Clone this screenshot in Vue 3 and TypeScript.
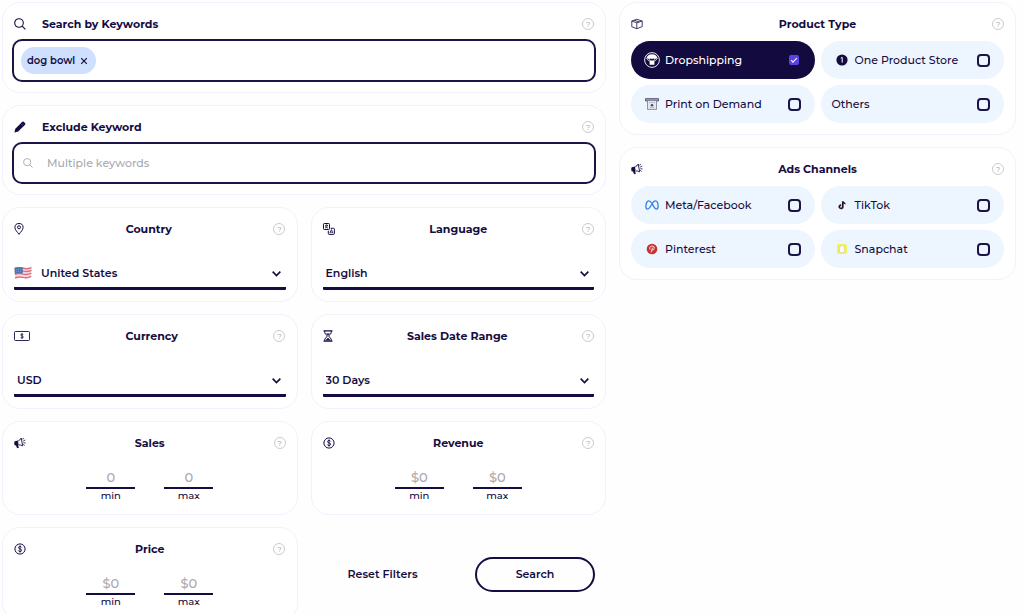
<script setup lang="ts">
import { reactive, ref } from 'vue'

interface SelectFilter {
  id: string
  title: string
  icon: string
  value: string
  options: string[]
  flag?: boolean
}

interface RangeFilter {
  id: string
  title: string
  icon: string
  placeholder: string
}

interface Choice {
  label: string
  icon?: string
  checked: boolean
}

interface ChoiceGroup {
  id: string
  title: string
  icon: string
  choices: Choice[]
}

const tags = ref<string[]>(['dog bowl'])
const keyword = ref('')
const excluded = ref('')

const selects = reactive<SelectFilter[]>([
  { id: 'country', title: 'Country', icon: 'pin', value: 'United States', options: ['United States', 'Canada', 'Germany'], flag: true },
  { id: 'language', title: 'Language', icon: 'translate', value: 'English', options: ['English', 'French', 'German'] },
  { id: 'currency', title: 'Currency', icon: 'banknote', value: 'USD', options: ['USD', 'EUR', 'GBP'] },
  { id: 'range', title: 'Sales Date Range', icon: 'hourglass', value: '30 Days', options: ['7 Days', '30 Days', '90 Days'] },
])

const ranges: RangeFilter[] = [
  { id: 'sales', title: 'Sales', icon: 'megaphone', placeholder: '0' },
  { id: 'revenue', title: 'Revenue', icon: 'coin', placeholder: '$0' },
  { id: 'price', title: 'Price', icon: 'coin', placeholder: '$0' },
]

const groups = reactive<ChoiceGroup[]>([
  {
    id: 'product',
    title: 'Product Type',
    icon: 'box',
    choices: [
      { label: 'Dropshipping', icon: 'parachute', checked: true },
      { label: 'One Product Store', icon: 'one', checked: false },
      { label: 'Print on Demand', icon: 'printer', checked: false },
      { label: 'Others', checked: false },
    ],
  },
  {
    id: 'ads',
    title: 'Ads Channels',
    icon: 'megaphone',
    choices: [
      { label: 'Meta/Facebook', icon: 'meta', checked: false },
      { label: 'TikTok', icon: 'tiktok', checked: false },
      { label: 'Pinterest', icon: 'pinterest', checked: false },
      { label: 'Snapchat', icon: 'snapchat', checked: false },
    ],
  },
])

function addTag() {
  const value = keyword.value.trim()
  if (value) tags.value.push(value)
  keyword.value = ''
}

function removeTag(index: number) {
  tags.value.splice(index, 1)
}

function reset() {
  tags.value = []
  excluded.value = ''
  groups.forEach((group) => group.choices.forEach((choice) => (choice.checked = false)))
}
</script>

<template>
  <svg class="sprite" aria-hidden="true">
    <symbol id="i-search" viewBox="0 0 12 12">
      <circle cx="5" cy="5" r="4.3" fill="none" stroke="currentColor" stroke-width="1.1" />
      <path d="M8.2 8.2 11.4 11.4" stroke="currentColor" stroke-width="1.2" />
    </symbol>
    <symbol id="i-pencil" viewBox="0 0 12 12">
      <path d="M.4 11.6 1.3 7.7 6.6 2.4 9.5 5.3 4.2 10.6zM7.3 1.7 8.3.8Q9 .2 9.7.8L11.2 2.3Q11.8 3 11.2 3.6L10.2 4.6z" fill="currentColor" />
      <path d="M6.500 2.500 7.500 1.500 10.400 4.400 9.400 5.400z" fill="currentColor" />
    </symbol>
    <symbol id="i-pin" viewBox="0 0 10 12">
      <path d="M5 11.3C3.4 9 .9 6.8 .9 4.5A4.1 4 0 0 1 9.1 4.5C9.1 6.8 6.6 9 5 11.3z" fill="none" stroke="currentColor" />
      <circle cx="5" cy="4.3" r="1.5" fill="none" stroke="currentColor" />
    </symbol>
    <symbol id="i-translate" viewBox="0 0 12 12">
      <rect x=".5" y=".5" width="6" height="6" rx=".8" fill="none" stroke="currentColor" />
      <path d="M2 2.3H5M3.5 1.5V2.3M4.6 2.3Q4 4.3 2 5.2M2.3 3.2Q3.2 4.8 5 5.2" fill="none" stroke="currentColor" stroke-width=".8" />
      <path d="M7.7 5.3H10.5Q11.4 5.3 11.4 6.2V10.5Q11.4 11.4 10.5 11.4H6.2Q5.3 11.4 5.3 10.5V7.7" fill="none" stroke="currentColor" />
      <path d="M6.8 10.3 8.4 6.6 10 10.3M7.4 9.2H9.4" fill="none" stroke="currentColor" stroke-width=".8" />
    </symbol>
    <symbol id="i-banknote" viewBox="0 0 16 10">
      <rect x=".5" y=".5" width="15" height="9" rx="1" fill="none" stroke="currentColor" stroke-width=".9" />
      <path d="M9.300 3.800Q8.900 3 8 3 6.800 3 6.800 3.900 6.800 4.700 8 4.900 9.300 5.100 9.300 6.100 9.300 7 8 7 7 7 6.600 6.200M8 2.100V7.900" fill="none" stroke="currentColor" stroke-width=".8" />
    </symbol>
    <symbol id="i-hourglass" viewBox="0 0 10 12">
      <path d="M.5 .9H9.5M.5 11.1H9.5" stroke="currentColor" stroke-width="1.3" />
      <path d="M1.8 1V3L4.4 6 1.8 9V11M8.2 1V3L5.6 6 8.2 9V11" fill="none" stroke="currentColor" />
      <path d="M2.3 10.5 5 7.8 7.7 10.5zM3 3.5H7L5 5.5z" fill="currentColor" />
    </symbol>
    <symbol id="i-megaphone" viewBox="0 0 12 12">
      <path d="M.3 5.2Q.3 4.5 1 4.3L4 3.6 4.600 8.2 4 8.3 4.9 10.8 3.1 11.3 2 8.6Q.5 8.5 .3 7.5z" fill="currentColor" />
      <path d="M4.3 3.8Q6.4 3 7.2 1L8.7 8.9Q6.8 7.6 4.6 8" fill="none" stroke="currentColor" stroke-width=".9" />
      <path d="M8.7 2.5 9.6 .9M9.2 4.1 11.3 3M9.4 5.7 11.6 6M9.2 7.2 10.7 8.5" stroke="currentColor" stroke-width=".8" />
    </symbol>
    <symbol id="i-coin" viewBox="0 0 12 12">
      <circle cx="6" cy="6" r="5.100" fill="none" stroke="currentColor" stroke-width="1" />
      <path d="M7.700 4.500Q7.200 3.500 6 3.500 4.500 3.500 4.500 4.700 4.500 5.700 6 5.900 7.700 6.200 7.700 7.300 7.700 8.500 6 8.500 4.700 8.500 4.200 7.400M6 2.400V9.600" fill="none" stroke="currentColor" stroke-width=".9" />
    </symbol>
    <symbol id="i-box" viewBox="0 0 12 12">
      <path d="M.8 3 5.8 1.3 11.2 3V8.6L5.8 10.7 .8 8.8zM.8 3 5.8 4.8 11.2 3M5.8 4.8V10.7M3.2 2.2 8.4 4" fill="none" stroke="currentColor" stroke-width=".8" stroke-linejoin="round" />
    </symbol>
    <symbol id="i-chevron" viewBox="0 0 10 10">
      <path d="M1.5 3.3 5 6.8 8.5 3.3" fill="none" stroke="currentColor" stroke-width="1.5" />
    </symbol>
    <symbol id="i-close" viewBox="0 0 8 8">
      <path d="M1.2 1.2 6.8 6.8M6.8 1.2 1.2 6.8" stroke="currentColor" stroke-width="1.2" />
    </symbol>
    <symbol id="i-flag" viewBox="0 0 16 12">
      <path d="M.5 1.5Q4 .2 8 1.2T15.6 .5L15.3 10Q12 11.5 8 10.5T1 11.3z" fill="#f5dfe3" />
      <path d="M.5 2Q4 .8 8 1.8T15.5 1.2M.6 4.5Q4 3.3 8 4.3T15.5 3.6M.8 7.2Q4 6 8 7T15.4 6.2M1 10.2Q4 9 8 9.9T15.3 9" fill="none" stroke="#e0707d" stroke-width="1.3" />
      <path d="M.5 1.5Q4 .4 7.8 1.2V6.5Q4 5.8 .8 6.9z" fill="#4c71ad" />
      <path d="M2 3H7M2 4.8H7" stroke="#a9bddb" stroke-width=".6" stroke-dasharray=".8 .8" />
    </symbol>
    <symbol id="i-parachute" viewBox="0 0 16 16">
      <circle cx="8" cy="8" r="7.4" fill="none" stroke="currentColor" stroke-width=".9" />
      <path d="M2.3 7.2Q3 2.3 8 2.300T13.700 7.200Q12.5 5.9 11 7 9.5 5.9 8 7 6.5 5.9 5 7 3.5 5.9 2.3 7.2zM5.600 8.600H10.400V12.800H5.600z" fill="currentColor" />
      <path d="M2.8 7 5.6 9.3M13.2 7 10.4 9.3M5 7 6.5 9M11 7 9.5 9" stroke="currentColor" stroke-width=".7" />
    </symbol>
    <symbol id="i-one" viewBox="0 0 12 12">
      <circle cx="6" cy="6" r="5.6" fill="currentColor" />
      <path d="M4.800 4.200 6.200 3.400V8.600" fill="none" stroke="#fff" />
    </symbol>
    <symbol id="i-printer" viewBox="0 0 14 12">
      <path d="M.5 .6H13.5V3H.5z" fill="#9a9bb0" stroke="#4b4a69" stroke-width=".8" />
      <path d="M2.5 2.5H11.5V11.4H2.5z" fill="#e4e8f1" stroke="#777991" stroke-width=".8" />
      <path d="M4 4.5H10M5 9.5H9" stroke="#9596aa" stroke-width=".8" stroke-dasharray="1 .6" />
      <circle cx="7" cy="7.2" r="1.3" fill="#4b4a69" />
    </symbol>
    <symbol id="i-meta" viewBox="0 0 14 10">
      <path d="M7 3.5C5.7 1.5 4.7 .9 3.7 .9 2 .9 .9 3.7 .9 6.2 .9 8 1.5 9.1 2.6 9.1 4.2 9.1 5.3 7.1 7 4 8.1 1.8 9.2 .9 10.3 .9 12.1 .9 13.1 3.8 13.1 6.3 13.1 8.1 12.5 9.1 11.5 9.1 10 9.1 9.1 7.2 7 3.5z" fill="none" stroke="#2f80e8" stroke-width="1.3" />
    </symbol>
    <symbol id="i-tiktok" viewBox="0 0 12 14">
      <path d="M6.8 2.8V9A2 2 0 1 1 4.9 7M6.8 2.8Q7.3 5 9.7 5.2" transform="translate(.6 .4)" fill="none" stroke="#ef5774" stroke-width="1.5" />
      <path d="M6.8 2.8V9A2 2 0 1 1 4.9 7M6.8 2.8Q7.3 5 9.7 5.2" transform="translate(-.3 -.2)" fill="none" stroke="#69cbd2" stroke-width="1.5" />
      <path d="M6.8 2.8V9A2 2 0 1 1 4.9 7M6.8 2.8Q7.3 5 9.7 5.2" fill="none" stroke="#19132e" stroke-width="1.6" />
    </symbol>
    <symbol id="i-pinterest" viewBox="0 0 12 12">
      <circle cx="6" cy="6" r="5.3" fill="#c8322f" />
      <path d="M5.1 9.5 6.5 4.6M4 6.6Q2.9 3.1 6.3 3 9 3.2 8.2 5.8 7.3 8 5.9 6.8" fill="none" stroke="#fff" stroke-width=".8" />
    </symbol>
    <symbol id="i-snapchat" viewBox="0 0 12 12">
      <rect x="1" y="1" width="10" height="10" rx="2" fill="#f3f05c" />
      <path d="M6 2.6C4.500 2.6 4 3.7 4 5.5L3.2 6.1 3.9 6.6Q3.5 7.8 2.7 8.1L4.1 8.7 4.500 9.2 6 9.7 7.5 9.2 7.9 8.7 9.3 8.1Q8.5 7.8 8.1 6.6L8.8 6.1 8 5.5C8 3.7 7.5 2.6 6 2.6z" fill="#fff" stroke="#bfc3a0" stroke-width=".5" />
    </symbol>
  </svg>

  <main class="page">
    <form class="filters" @submit.prevent>
      <section class="card wide">
        <header class="head start">
          <svg class="icon"><use href="#i-search" /></svg>
          <label class="title" for="keywords">Search by Keywords</label>
          <button class="help" type="button" aria-label="About keywords">?</button>
        </header>
        <div class="field">
          <span v-for="(tag, index) in tags" :key="tag" class="tag">
            {{ tag }}
            <button type="button" :aria-label="`Remove ${tag}`" @click="removeTag(index)">
              <svg><use href="#i-close" /></svg>
            </button>
          </span>
          <input id="keywords" v-model="keyword" type="text" @keydown.enter.prevent="addTag" />
        </div>
      </section>

      <section class="card wide">
        <header class="head start">
          <svg class="icon"><use href="#i-pencil" /></svg>
          <label class="title" for="excluded">Exclude Keyword</label>
          <button class="help" type="button" aria-label="About excluded keywords">?</button>
        </header>
        <div class="field exclude">
          <svg class="hint"><use href="#i-search" /></svg>
          <input id="excluded" v-model="excluded" type="text" placeholder="Multiple keywords" />
        </div>
      </section>

      <section v-for="item in selects" :key="item.id" class="card">
        <header class="head">
          <svg class="icon" :class="item.icon"><use :href="`#i-${item.icon}`" /></svg>
          <label class="title" :for="item.id">{{ item.title }}</label>
          <button class="help" type="button" :aria-label="`About ${item.title}`">?</button>
        </header>
        <div class="select">
          <svg v-if="item.flag" class="flag"><use href="#i-flag" /></svg>
          <select :id="item.id" v-model="item.value">
            <option v-for="option in item.options" :key="option">{{ option }}</option>
          </select>
          <svg class="chevron"><use href="#i-chevron" /></svg>
        </div>
      </section>

      <section v-for="item in ranges" :key="item.id" class="card">
        <header class="head">
          <svg class="icon"><use :href="`#i-${item.icon}`" /></svg>
          <h2 class="title">{{ item.title }}</h2>
          <button class="help" type="button" :aria-label="`About ${item.title}`">?</button>
        </header>
        <div class="range">
          <label v-for="bound in ['min', 'max']" :key="bound" class="bound">
            <input type="text" inputmode="numeric" :placeholder="item.placeholder" />
            {{ bound }}
          </label>
        </div>
      </section>

      <div class="actions">
        <button class="reset" type="button" @click="reset">Reset Filters</button>
        <button class="submit" type="submit">Search</button>
      </div>
    </form>

    <aside class="side">
      <section v-for="group in groups" :key="group.id" class="card options">
        <header class="head">
          <svg class="icon"><use :href="`#i-${group.icon}`" /></svg>
          <h2 class="title">{{ group.title }}</h2>
          <button class="help" type="button" :aria-label="`About ${group.title}`">?</button>
        </header>
        <div class="choices">
          <label v-for="choice in group.choices" :key="choice.label" class="choice" :class="{ on: choice.checked }">
            <svg v-if="choice.icon" class="mark" :class="choice.icon"><use :href="`#i-${choice.icon}`" /></svg>
            <span>{{ choice.label }}</span>
            <input v-model="choice.checked" type="checkbox" />
          </label>
        </div>
      </section>
    </aside>
  </main>
</template>

<style>
html {
  background: #fefefe;
  scrollbar-width: none;
}
</style>

<style scoped>
.sprite {
  position: absolute;
  width: 0;
  height: 0;
}

.page {
  display: grid;
  grid-template-columns: 604fr 397fr;
  align-items: start;
  gap: 13px;
  padding: 2px 8px 0 2px;
  color: #150d42;
  font: 500 11px/16px Montserrat, Inter, "Open Sans", sans-serif;
}

.page *,
.page {
  box-sizing: border-box;
}

button,
input,
select {
  margin: 0;
  padding: 0;
  border: 0;
  background: none;
  color: inherit;
  font: inherit;
  outline: none;
}

button {
  cursor: pointer;
}

.filters {
  display: grid;
  grid-template-columns: 1fr 1fr;
  gap: 12px 13px;
}

.card {
  padding: 12px 11px 11px;
  border: 1px solid #f0f2fc;
  border-radius: 18px;
  background: #fff;
}

.wide {
  grid-column: 1 / -1;
  padding: 12px 9px 10px;
}

.head {
  display: flex;
  align-items: center;
  justify-content: space-between;
  height: 18px;
}

.wide .head {
  padding: 0 2px;
}

.start {
  gap: 16px;
}

.start .title {
  margin-right: auto;
}

.title {
  margin: 0;
  font-size: 11px;
  font-weight: 700;
  line-height: 18px;
}

.icon {
  width: 12px;
  height: 12px;
}

.icon.pin,
.icon.hourglass {
  width: 10px;
}

.icon.banknote {
  width: 16px;
  height: 10px;
}

.help {
  width: 12px;
  height: 12px;
  border: 1px solid #cbcbd0;
  border-radius: 50%;
  color: #b4b4bc;
  font-size: 8px;
  line-height: 10px;
  text-align: center;
}

.field {
  display: flex;
  align-items: center;
  height: 43px;
  margin-top: 6px;
  padding: 0 7px;
  border: 2px solid #1c1446;
  border-radius: 10px;
}

.field.exclude {
  height: 42px;
  gap: 14px;
  padding: 0 9px;
}

.field input {
  flex: 1;
  min-width: 0;
}

.hint {
  width: 10px;
  height: 10px;
  color: #a9a9b2;
}

input::placeholder {
  color: #a9a9ae;
  opacity: 1;
}

.tag {
  display: flex;
  align-items: center;
  gap: 5px;
  height: 27px;
  padding: 0 8px 0 6px;
  border-radius: 14px;
  background: #cee0fd;
  font-size: 10px;
  font-weight: 600;
}

.tag svg {
  display: block;
  width: 8px;
  height: 8px;
}

.select {
  position: relative;
  display: flex;
  align-items: center;
  height: 31px;
  margin-top: 21px;
  border-bottom: 3px solid #150d42;
  border-radius: 1px;
}

.flag {
  width: 18px;
  height: 14px;
  margin-right: 6px;
}

.select select {
  flex: 1;
  padding: 0 24px 0 3px;
  appearance: none;
  font-weight: 600;
}

.chevron {
  position: absolute;
  right: 4px;
  width: 11px;
  height: 11px;
  pointer-events: none;
}

.range {
  display: flex;
  justify-content: center;
  gap: 29px;
  margin-top: 15px;
}

.bound {
  width: 49px;
  font-size: 10px;
  line-height: 14px;
  text-align: center;
}

.bound input {
  display: block;
  width: 100%;
  height: 22px;
  border-bottom: 2px solid #150d42;
  font-size: 13px;
  text-align: center;
}

.actions {
  display: flex;
  align-items: center;
  justify-content: space-between;
  padding: 0 11px 0 37px;
  font-weight: 600;
}

.submit {
  width: 120px;
  height: 35px;
  border: 2px solid #150d42;
  border-radius: 18px;
}

.side {
  display: grid;
  gap: 12px;
}

.options {
  padding: 12px 11px 11px;
}

.choices {
  display: grid;
  grid-template-columns: 1fr 1fr;
  gap: 6px;
  margin-top: 8px;
}

.choice {
  display: flex;
  align-items: center;
  height: 38px;
  padding: 0 14px 0 11px;
  border-radius: 19px;
  background: #edf5ff;
  cursor: pointer;
}

.choice.on {
  background: #130a40;
  color: #fff;
}

.mark {
  width: 14px;
  height: 12px;
  margin: 0 6px 0 3px;
}

.mark.parachute {
  width: 16px;
  height: 16px;
  margin: 0 5px 0 2px;
}

.choice input {
  display: grid;
  place-items: center;
  width: 13px;
  height: 13px;
  margin-left: auto;
  border: 2px solid #1c1446;
  border-radius: 4px;
  appearance: none;
}

.choice input:checked {
  width: 10px;
  height: 10px;
  margin-right: 2px;
  border: 0;
  border-radius: 2px;
  background: #5a43e6;
}

.choice input:checked::after {
  width: 5px;
  height: 2px;
  margin-bottom: 2px;
  border: solid #fff;
  border-width: 0 0 1px 1px;
  transform: rotate(-45deg);
  content: "";
}
</style>
